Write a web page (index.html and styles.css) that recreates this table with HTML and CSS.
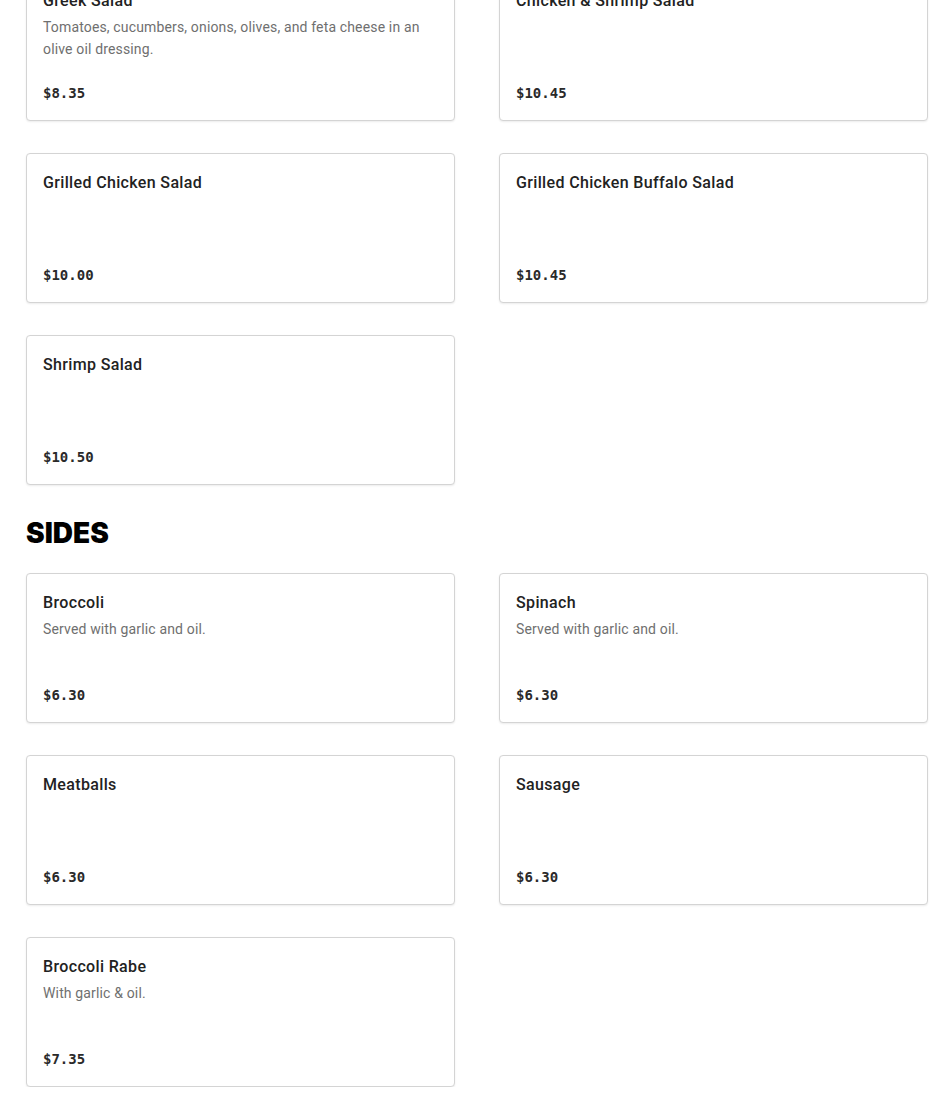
FILE: index.html
```html
<!DOCTYPE html>
<html>
<head>
<meta charset="utf-8">
<link rel="stylesheet" href="styles.css">
</head>
<body>
<main class="menu">
  <section class="section">
    <div class="grid">
      <div class="card">
        <div class="title">Greek Salad</div>
        <div class="desc">Tomatoes, cucumbers, onions, olives, and feta cheese in an olive oil dressing.</div>
        <div class="price">$8.35</div>
      </div>
      <div class="card">
        <div class="title">Chicken &amp; Shrimp Salad</div>
        <div class="price">$10.45</div>
      </div>
      <div class="card">
        <div class="title">Grilled Chicken Salad</div>
        <div class="price">$10.00</div>
      </div>
      <div class="card">
        <div class="title">Grilled Chicken Buffalo Salad</div>
        <div class="price">$10.45</div>
      </div>
      <div class="card">
        <div class="title">Shrimp Salad</div>
        <div class="price">$10.50</div>
      </div>
    </div>
  </section>
  <section class="section">
    <h2 class="heading">SIDES</h2>
    <div class="grid">
      <div class="card">
        <div class="title">Broccoli</div>
        <div class="desc">Served with garlic and oil.</div>
        <div class="price">$6.30</div>
      </div>
      <div class="card">
        <div class="title">Spinach</div>
        <div class="desc">Served with garlic and oil.</div>
        <div class="price">$6.30</div>
      </div>
      <div class="card">
        <div class="title">Meatballs</div>
        <div class="price">$6.30</div>
      </div>
      <div class="card">
        <div class="title">Sausage</div>
        <div class="price">$6.30</div>
      </div>
      <div class="card">
        <div class="title">Broccoli Rabe</div>
        <div class="desc">With garlic &amp; oil.</div>
        <div class="price">$7.35</div>
      </div>
    </div>
  </section>
</main>
</body>
</html>
```
FILE: styles.css
```css
html, body {
  margin: 0;
  padding: 0;
  background: #fff;
}
body {
  font-family: "Roboto", "Liberation Sans", sans-serif;
  color: #222;
}
.menu {
  margin-top: -29px;
  padding: 0 22px 0 26px;
}
.grid {
  display: grid;
  grid-template-columns: 1fr 1fr;
  column-gap: 44px;
  row-gap: 32px;
}
.card {
  box-sizing: border-box;
  height: 150px;
  border: 1px solid #d4d4d4;
  border-radius: 4px;
  box-shadow: 0 1px 2px rgba(0, 0, 0, 0.08);
  padding: 17px 16px 17px 16px;
  display: flex;
  flex-direction: column;
  background: #fff;
}
.title {
  font-size: 16px;
  font-weight: 500;
  line-height: 24px;
  letter-spacing: 0.35px;
  color: #222;
}
.desc {
  margin-top: 3px;
  font-size: 14px;
  line-height: 22px;
  letter-spacing: 0.15px;
  color: #6f6f6f;
}
.price {
  margin-top: auto;
  font-family: "DejaVu Sans Mono", "Liberation Mono", monospace;
  font-weight: bold;
  font-size: 14px;
  line-height: 20px;
  color: #2a2a2a;
}
.heading {
  margin: 30px 0 22px 0;
  font-family: "Inter", "Liberation Sans", sans-serif;
  font-size: 28px;
  line-height: 36px;
  font-weight: 900;
  color: #000;
  letter-spacing: 0;
}
```
